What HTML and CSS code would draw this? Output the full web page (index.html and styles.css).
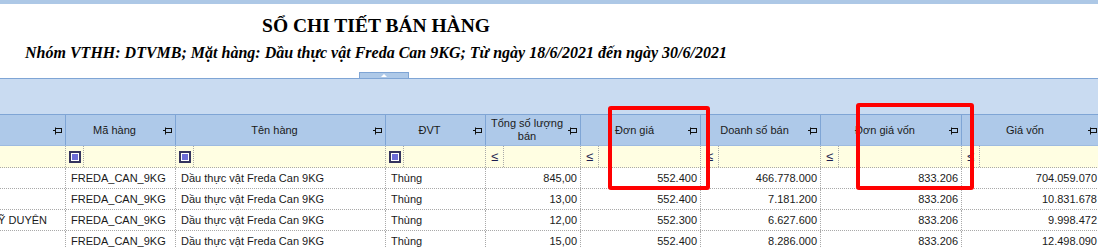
FILE: index.html
```html
<!DOCTYPE html>
<html lang="vi">
<head>
<meta charset="utf-8">
<title>Sổ chi tiết bán hàng</title>
<link rel="stylesheet" href="styles.css">
</head>
<body>
<div class="topstrip"></div>
<header class="report">
  <h1 class="title">SỔ CHI TIẾT BÁN HÀNG</h1>
  <p class="subtitle">Nhóm VTHH: DTVMB; Mặt hàng: Dầu thực vật Freda Can 9KG; Từ ngày 18/6/2021 đến ngày 30/6/2021</p>
  <div class="tabrow"><div class="collapse-tab"><span class="tri"></span></div></div>
</header>
<div class="group-panel"></div>

<div class="grid">
  <div class="row head">
    <div class="hc"><span class="hl"></span><svg class="pin" width="10" height="8" viewBox="0 0 10 8"><path d="M0 3.5H2.5M2.5 0.5V7.5" stroke="#111" fill="none"/><rect x="2.5" y="1.5" width="6" height="4" stroke="#111" fill="none"/></svg></div>
    <div class="hc"><span class="hl">Mã hàng</span><svg class="pin" width="10" height="8" viewBox="0 0 10 8"><path d="M0 3.5H2.5M2.5 0.5V7.5" stroke="#111" fill="none"/><rect x="2.5" y="1.5" width="6" height="4" stroke="#111" fill="none"/></svg></div>
    <div class="hc"><span class="hl">Tên hàng</span><svg class="pin" width="10" height="8" viewBox="0 0 10 8"><path d="M0 3.5H2.5M2.5 0.5V7.5" stroke="#111" fill="none"/><rect x="2.5" y="1.5" width="6" height="4" stroke="#111" fill="none"/></svg></div>
    <div class="hc"><span class="hl">ĐVT</span><svg class="pin" width="10" height="8" viewBox="0 0 10 8"><path d="M0 3.5H2.5M2.5 0.5V7.5" stroke="#111" fill="none"/><rect x="2.5" y="1.5" width="6" height="4" stroke="#111" fill="none"/></svg></div>
    <div class="hc"><span class="hl">Tổng số lượng<br>bán</span><svg class="pin" width="10" height="8" viewBox="0 0 10 8"><path d="M0 3.5H2.5M2.5 0.5V7.5" stroke="#111" fill="none"/><rect x="2.5" y="1.5" width="6" height="4" stroke="#111" fill="none"/></svg></div>
    <div class="hc"><span class="hl">Đơn giá</span><svg class="pin" width="10" height="8" viewBox="0 0 10 8"><path d="M0 3.5H2.5M2.5 0.5V7.5" stroke="#111" fill="none"/><rect x="2.5" y="1.5" width="6" height="4" stroke="#111" fill="none"/></svg></div>
    <div class="hc"><span class="hl">Doanh số bán</span><svg class="pin" width="10" height="8" viewBox="0 0 10 8"><path d="M0 3.5H2.5M2.5 0.5V7.5" stroke="#111" fill="none"/><rect x="2.5" y="1.5" width="6" height="4" stroke="#111" fill="none"/></svg></div>
    <div class="hc"><span class="hl">Đơn giá vốn</span><svg class="pin" width="10" height="8" viewBox="0 0 10 8"><path d="M0 3.5H2.5M2.5 0.5V7.5" stroke="#111" fill="none"/><rect x="2.5" y="1.5" width="6" height="4" stroke="#111" fill="none"/></svg></div>
    <div class="hc"><span class="hl">Giá vốn</span><svg class="pin" width="10" height="8" viewBox="0 0 10 8"><path d="M0 3.5H2.5M2.5 0.5V7.5" stroke="#111" fill="none"/><rect x="2.5" y="1.5" width="6" height="4" stroke="#111" fill="none"/></svg></div>
  </div>

  <div class="row filter">
    <div class="fc"></div>
    <div class="fc"><span class="op"><span class="chk"><span class="chk-in"></span></span></span></div>
    <div class="fc"><span class="op"><span class="chk"><span class="chk-in"></span></span></span></div>
    <div class="fc"><span class="op"><span class="chk"><span class="chk-in"></span></span></span></div>
    <div class="fc"><span class="op"><span class="le">≤</span></span></div>
    <div class="fc"><span class="op"><span class="le">≤</span></span></div>
    <div class="fc"><span class="op"><span class="le">≤</span></span></div>
    <div class="fc"><span class="op"><span class="le">≤</span></span></div>
    <div class="fc"><span class="op"><span class="le">≤</span></span></div>
  </div>

  <div class="row data">
    <div class="dc clip"><span></span></div>
    <div class="dc">FREDA_CAN_9KG</div>
    <div class="dc">Dầu thực vật Freda Can 9KG</div>
    <div class="dc">Thùng</div>
    <div class="dc num">845,00</div>
    <div class="dc num">552.400</div>
    <div class="dc num">466.778.000</div>
    <div class="dc num">833.206</div>
    <div class="dc num">704.059.070</div>
  </div>
  <div class="row data">
    <div class="dc clip"><span></span></div>
    <div class="dc">FREDA_CAN_9KG</div>
    <div class="dc">Dầu thực vật Freda Can 9KG</div>
    <div class="dc">Thùng</div>
    <div class="dc num">13,00</div>
    <div class="dc num">552.400</div>
    <div class="dc num">7.181.200</div>
    <div class="dc num">833.206</div>
    <div class="dc num">10.831.678</div>
  </div>
  <div class="row data">
    <div class="dc clip"><span>ĐẠI LÝ MỸ DUYÊN</span></div>
    <div class="dc">FREDA_CAN_9KG</div>
    <div class="dc">Dầu thực vật Freda Can 9KG</div>
    <div class="dc">Thùng</div>
    <div class="dc num">12,00</div>
    <div class="dc num">552.300</div>
    <div class="dc num">6.627.600</div>
    <div class="dc num">833.206</div>
    <div class="dc num">9.998.472</div>
  </div>
  <div class="row data">
    <div class="dc clip"><span></span></div>
    <div class="dc">FREDA_CAN_9KG</div>
    <div class="dc">Dầu thực vật Freda Can 9KG</div>
    <div class="dc">Thùng</div>
    <div class="dc num">15,00</div>
    <div class="dc num">552.400</div>
    <div class="dc num">8.286.000</div>
    <div class="dc num">833.206</div>
    <div class="dc num">12.498.090</div>
  </div>
</div>

<div class="mark mark-dongia"></div>
<div class="mark mark-dongiavon"></div>
</body>
</html>
```

FILE: styles.css
```css
* { box-sizing: border-box; }

html, body {
  margin: 0;
  padding: 0;
  background: #ffffff;
}

body {
  width: 1098px;
  height: 247px;
  overflow: hidden;
  position: relative;
  font-family: "Liberation Sans", Arial, sans-serif;
  font-size: 11px;
  color: #1a1a1a;
}

.topstrip {
  height: 4px;
  background: #adc8e6;
}

.report {
  height: 74px;
  padding-top: 11px;
  background: #ffffff;
  display: flex;
  flex-direction: column;
}

.title {
  margin: 0;
  width: 752px;
  text-align: center;
  font-family: "Liberation Serif", "Times New Roman", serif;
  font-weight: bold;
  font-size: 19.5px;
  line-height: 22px;
  color: #000;
}

.subtitle {
  margin: 7px 0 0;
  width: 752px;
  text-align: center;
  font-family: "Liberation Serif", "Times New Roman", serif;
  font-weight: bold;
  font-style: italic;
  font-size: 16px;
  line-height: 18px;
  color: #000;
}

.tabrow {
  margin-top: auto;
  height: 6px;
  padding-left: 359px;
}

.collapse-tab {
  width: 50px;
  height: 6px;
  background: #aec9e8;
  border: 1px solid #7fa5d5;
  border-bottom: none;
  display: flex;
  justify-content: center;
  padding-top: 1px;
}

.tri {
  width: 0;
  height: 0;
  border-left: 3px solid transparent;
  border-right: 3px solid transparent;
  border-bottom: 3px solid #ffffff;
}

.group-panel {
  height: 36px;
  border-top: 1px solid #7fa5d5;
  background: #c9dbf1;
}

.grid {
  width: 1101px;
}

.row {
  display: grid;
  grid-template-columns: 66px 110px 210px 100px 95px 120px 120px 141px 139px;
}

.head {
  height: 32px;
  border-top: 1px solid #7fa5d5;
  border-bottom: 1px solid #9ebbe0;
  background: #aec9e9;
}

.hc {
  display: flex;
  align-items: center;
  border-right: 1px solid #7fa5d5;
  min-width: 0;
}

.hl {
  flex: 1;
  text-align: center;
  line-height: 13px;
  color: #1a1a1a;
  white-space: nowrap;
}

.pin {
  flex: none;
  margin-right: 2px;
  margin-top: 1px;
}

.filter {
  height: 22px;
  background: #fffee2;
  border-bottom: 1px dotted #a9a9a9;
}

.fc {
  display: flex;
  border-right: 1px dotted #a9a9a9;
}

.op {
  width: 18px;
  border-right: 1px dotted #a9a9a9;
  display: flex;
  align-items: center;
  padding-left: 3px;
}

.chk {
  width: 12px;
  height: 12px;
  border: 2px solid #34345e;
  padding: 1px;
  background: #ffffff;
}

.chk-in {
  display: block;
  width: 6px;
  height: 6px;
  background: #6c6cd6;
}

.le {
  font-size: 13px;
  line-height: 13px;
  color: #1c1c4e;
  padding-left: 2px;
  text-decoration: none;
}

.data {
  height: 21px;
  border-bottom: 1px dotted #a9a9a9;
  background: #ffffff;
}

.dc {
  border-right: 1px dotted #a9a9a9;
  padding: 0 3px 0 5px;
  line-height: 20px;
  white-space: nowrap;
  overflow: hidden;
  color: #1a1a1a;
}

.dc.num {
  text-align: right;
}

.dc.clip {
  display: flex;
  justify-content: flex-end;
  padding-right: 18px;
}

.dc.clip span {
  flex: none;
}

.mark {
  position: absolute;
  border: 4px solid #ff0000;
  border-radius: 3px;
}

.mark-dongia {
  left: 608px;
  top: 106px;
  width: 102px;
  height: 84px;
}

.mark-dongiavon {
  left: 856px;
  top: 103px;
  width: 118px;
  height: 87px;
}
```
